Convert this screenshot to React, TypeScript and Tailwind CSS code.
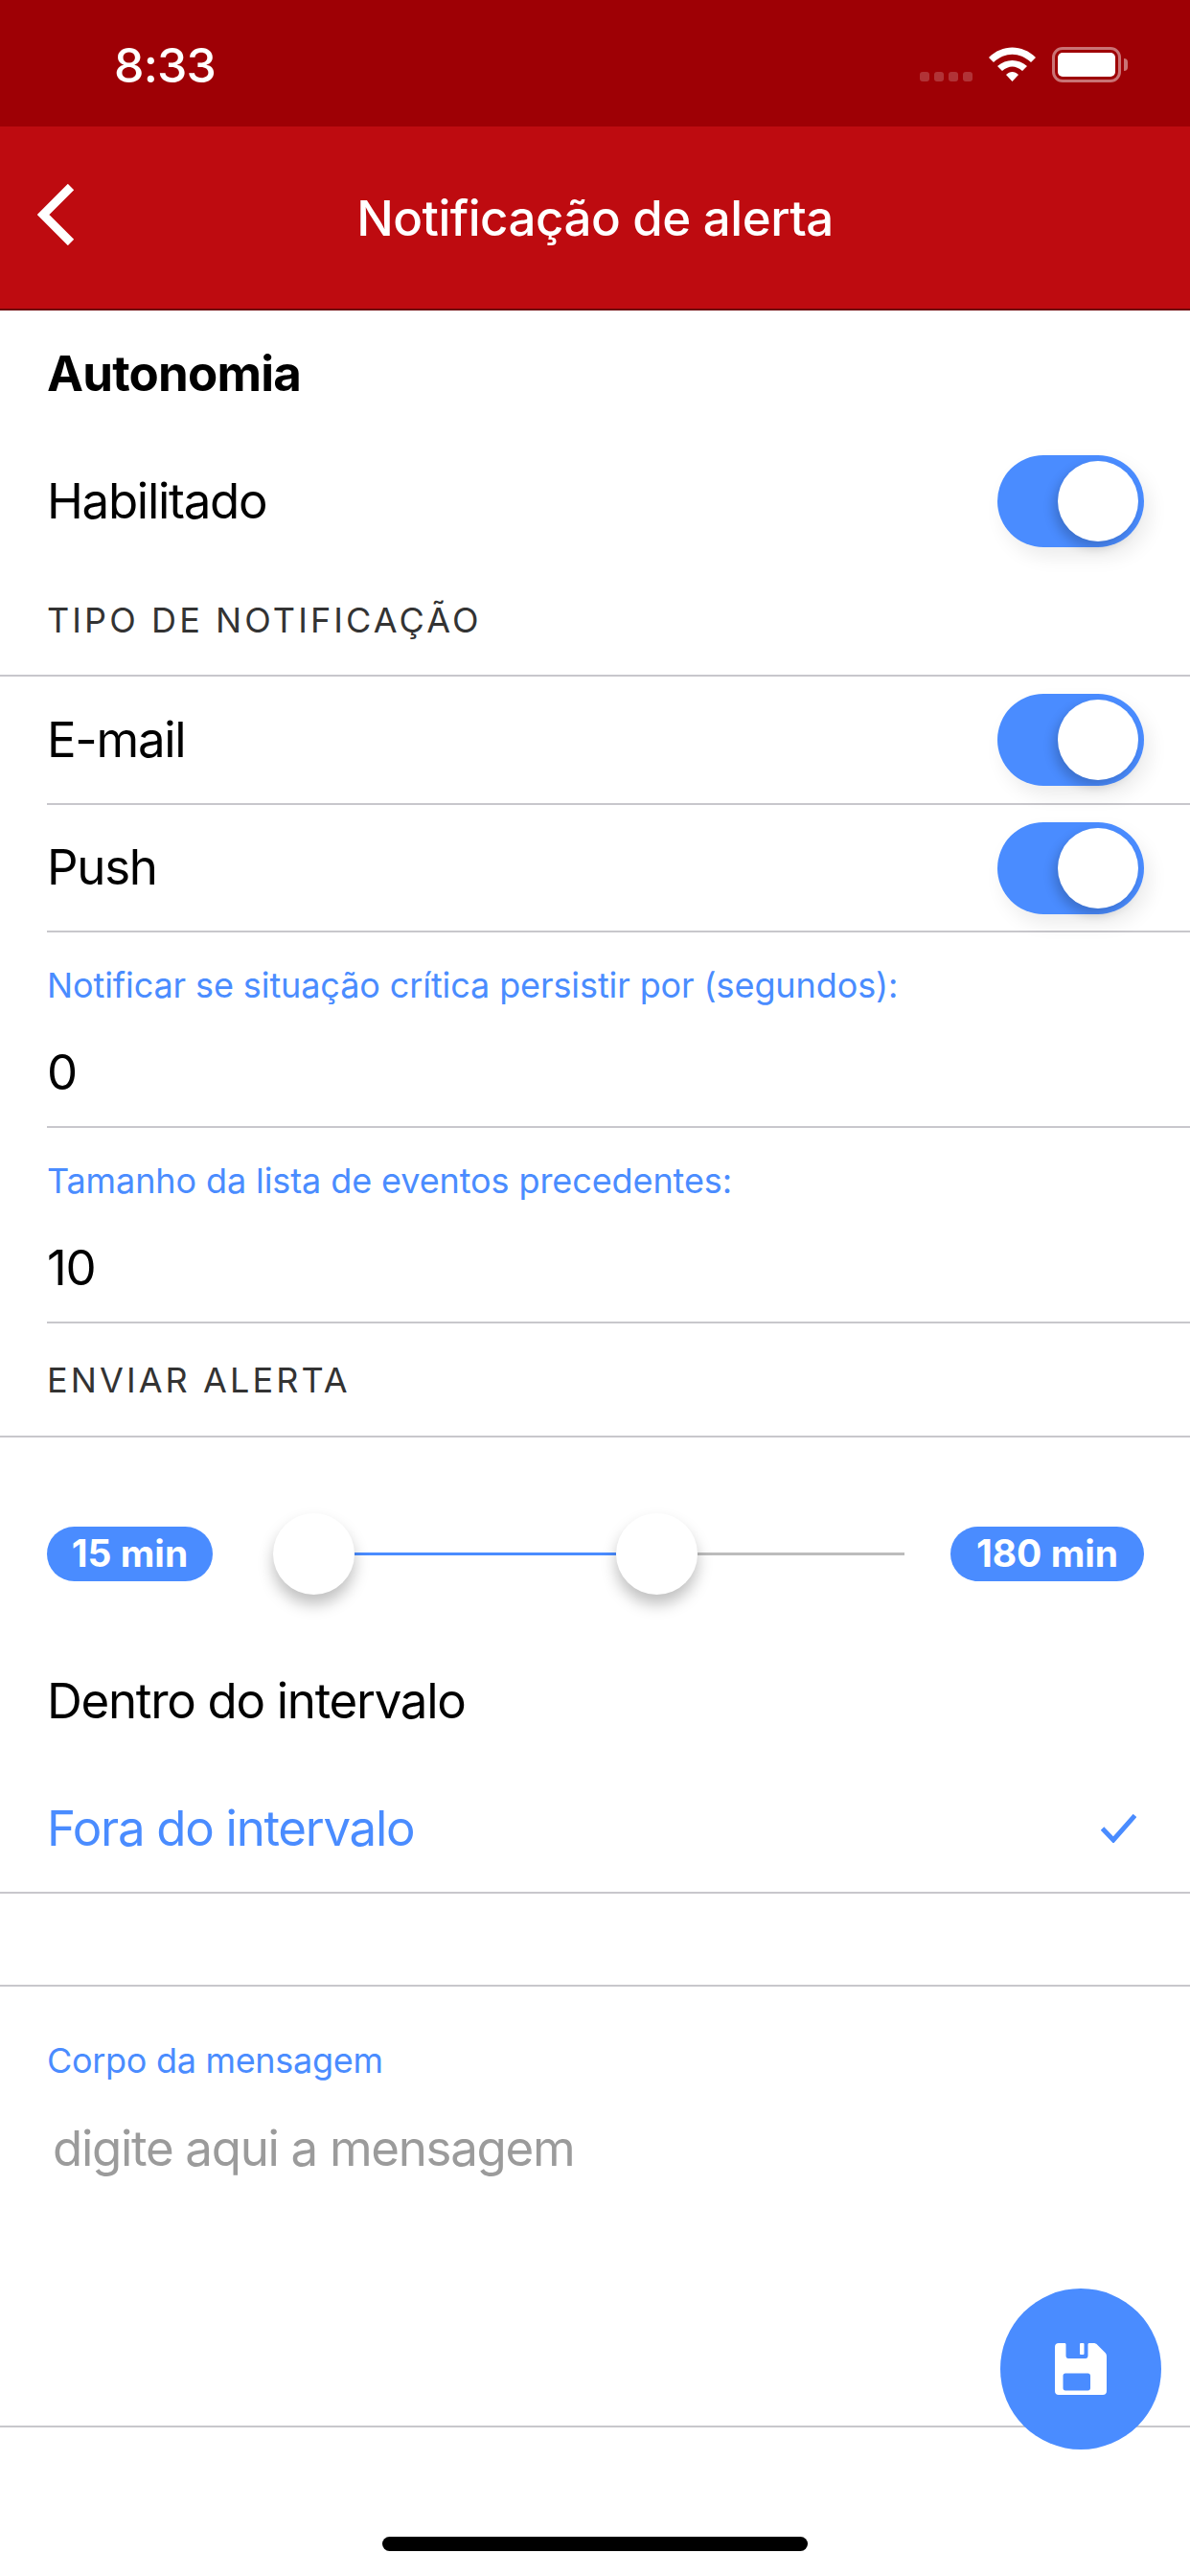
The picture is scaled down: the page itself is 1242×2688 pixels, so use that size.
const BLUE = 'text-[#4a8cff]'

function Toggle() {
  return (
    <div className="flex h-[96px] w-[153px] items-center justify-end rounded-full bg-[#4a8cff] pr-[6px] shadow-[6px_10px_20px_rgba(0,0,0,0.08)]">
      <div className="h-[84px] w-[84px] rounded-full bg-white shadow-[-4px_6px_12px_rgba(0,0,0,0.2)]" />
    </div>
  )
}

function Thumb() {
  return <div className="z-10 h-[85px] w-[85px] shrink-0 rounded-full bg-white shadow-[0_10px_16px_rgba(0,0,0,0.25)]" />
}

function Badge({ children, width }: { children: string; width: string }) {
  return (
    <div className={`flex h-[57px] shrink-0 items-center justify-center rounded-full bg-[#4a8cff] text-[39px] font-bold tracking-[0px] text-white ${width}`}>
      {children}
    </div>
  )
}

function ToggleRow({ label, height }: { label: string; height: string }) {
  return (
    <div className={`flex items-center justify-between pr-[48px] ${height}`}>
      <span>{label}</span>
      <Toggle />
    </div>
  )
}

function SectionTitle({ children, height }: { children: string; height: string }) {
  return (
    <div className={`-ml-[49px] flex items-center border-b-2 border-[#c8c7cc] pl-[49px] text-[36px] tracking-[3.1px] text-[#333] ${height}`}>
      {children}
    </div>
  )
}

function NumberField({ label, value }: { label: string; value: string }) {
  return (
    <div className="flex h-[204px] flex-col border-b-2 border-[#c8c7cc]">
      <div className={`mt-[30px] h-[50px] text-[36px] leading-[50px] tracking-[-0.1px] ${BLUE}`}>{label}</div>
      <div className="mt-[30px] h-[72px] leading-[72px]">{value}</div>
    </div>
  )
}

export default function App() {
  return (
    <div className="relative flex h-[2688px] w-[1242px] flex-col overflow-hidden bg-white font-['Inter',sans-serif] text-[51px] tracking-[-1.3px] text-black">
      <div className="flex h-[132px] shrink-0 items-start justify-between bg-[#9e0005] pl-[119px] pr-[65px] pt-[38px]">
        <span className="text-[50px] leading-[60px] font-medium tracking-[-0.8px] text-white">8:33</span>
        <div className="flex items-start pt-[11px]">
          <div className="mr-[17px] mt-[26px] flex gap-[5px]">
            <div className="h-[10px] w-[10px] rounded-[3px] bg-white/20" />
            <div className="h-[10px] w-[10px] rounded-[3px] bg-white/20" />
            <div className="h-[10px] w-[10px] rounded-[3px] bg-white/20" />
            <div className="h-[10px] w-[10px] rounded-[3px] bg-white/20" />
          </div>
          <svg width="49" height="36" viewBox="0 0 49 36" fill="white" className="mr-[17px]">
            <path d="M0 11C14-3 35-3 49 11L44 16C32 5 17 5 5 16Z" />
            <path d="M9 20C18 12 31 12 40 20L35 25C28 19 21 19 14 25Z" />
            <path d="M18 29C22 25 27 25 31 29L24.500 36Z" />
          </svg>
          <div className="flex h-[37px] w-[72px] items-center justify-center rounded-[11px] border-[3px] border-white/45">
            <div className="h-[25px] w-[60px] rounded-[5px] bg-white" />
          </div>
          <div className="ml-[3px] mt-[12px] h-[13px] w-[4px] rounded-r-full bg-white/45" />
        </div>
      </div>

      <div className="relative flex h-[192px] shrink-0 items-center justify-center border-b-2 border-[#6e0508] bg-[#be0b10] pt-[2px]">
        <svg width="40" height="64" viewBox="0 0 40 64" fill="none" stroke="white" strokeWidth="9" className="absolute left-[39px] top-[60px]">
          <path d="M35 3L6 32L35 61" />
        </svg>
        <span className="text-[51px] font-medium tracking-[-0.5px] text-white">Notificação de alerta</span>
      </div>

      <div className="flex flex-col pl-[49px]">
        <div className="flex h-[133px] items-center font-bold tracking-[-0.8px]">Autonomia</div>
        <ToggleRow label="Habilitado" height="h-[132px]" />
        <SectionTitle height="h-[117px]">TIPO DE NOTIFICAÇÃO</SectionTitle>
        <div className="border-b-2 border-[#c8c7cc]">
          <ToggleRow label="E-mail" height="h-[132px]" />
        </div>
        <div className="border-b-2 border-[#c8c7cc]">
          <ToggleRow label="Push" height="h-[131px]" />
        </div>
        <NumberField label="Notificar se situação crítica persistir por (segundos):" value="0" />
        <NumberField label="Tamanho da lista de eventos precedentes:" value="10" />
        <SectionTitle height="h-[119px]">ENVIAR ALERTA</SectionTitle>

        <div className="flex h-[209px] items-center pb-[2px] pr-[48px] pt-[36px]">
          <Badge width="w-[173px]">15 min</Badge>
          <div className="ml-[63px] mr-[48px] flex flex-1 items-center">
            <Thumb />
            <div className="h-[3px] w-[273px] bg-[#4a8cff]" />
            <Thumb />
            <div className="h-[3px] flex-1 bg-[#bcbcbc]" />
          </div>
          <Badge width="w-[202px]">180 min</Badge>
        </div>

        <div className="flex h-[133px] items-center">Dentro do intervalo</div>
        <div className={`flex h-[132px] items-center justify-between pr-[56px] ${BLUE}`}>
          <span>Fora do intervalo</span>
          <svg width="37" height="30" viewBox="0 0 37 30" fill="none" stroke="#4a8cff" strokeWidth="5">
            <path d="M1.500 15L13 27L35.500 1.500" />
          </svg>
        </div>
      </div>

      <div className="h-[2px] bg-[#c8c7cc]" />
      <div className="h-[95px]" />
      <div className="h-[2px] bg-[#c8c7cc]" />

      <div className="flex h-[460px] flex-col border-b-2 border-[#c8c7cc] pl-[49px]">
        <div className={`mt-[52px] h-[50px] text-[36px] leading-[50px] tracking-[-0.3px] ${BLUE}`}>Corpo da mensagem</div>
        <div className="ml-[6px] mt-[29px] text-[#9b9b9b]">digite aqui a mensagem</div>
      </div>

      <div className="absolute left-[1044px] top-[2388px] flex h-[168px] w-[168px] items-center justify-center rounded-full bg-[#4a8cff]">
        <svg width="54" height="54" viewBox="0 0 54 54" fill="white">
          <path
            fillRule="evenodd"
            d="M4 0H10C11 0 11.500 .5 11.500 1.500V13C11.500 15 12.500 16 14 16H32C33.500 16 34.500 15 34.500 13V1.500C34.500 .5 35 0 36 0H40C42 0 43 .5 44 1.500L52 9.500C53.500 11 54 12 54 14V50C54 52.500 52.500 54 50 54H4C1.500 54 0 52.500 0 50V4C0 1.500 1.500 0 4 0ZM11 31.500C9.500 31.500 8.500 32.500 8.500 34V47C8.500 48.500 9.500 49.500 11 49.500H34.500C36 49.500 37 48.500 37 47V34C37 32.500 36 31.500 34.500 31.500Z"
          />
          <rect x="26" y="0" width="4.500" height="12" rx="1" />
        </svg>
      </div>

      <div className="absolute left-[399px] top-[2647px] h-[15px] w-[444px] rounded-full bg-black" />
    </div>
  )
}
